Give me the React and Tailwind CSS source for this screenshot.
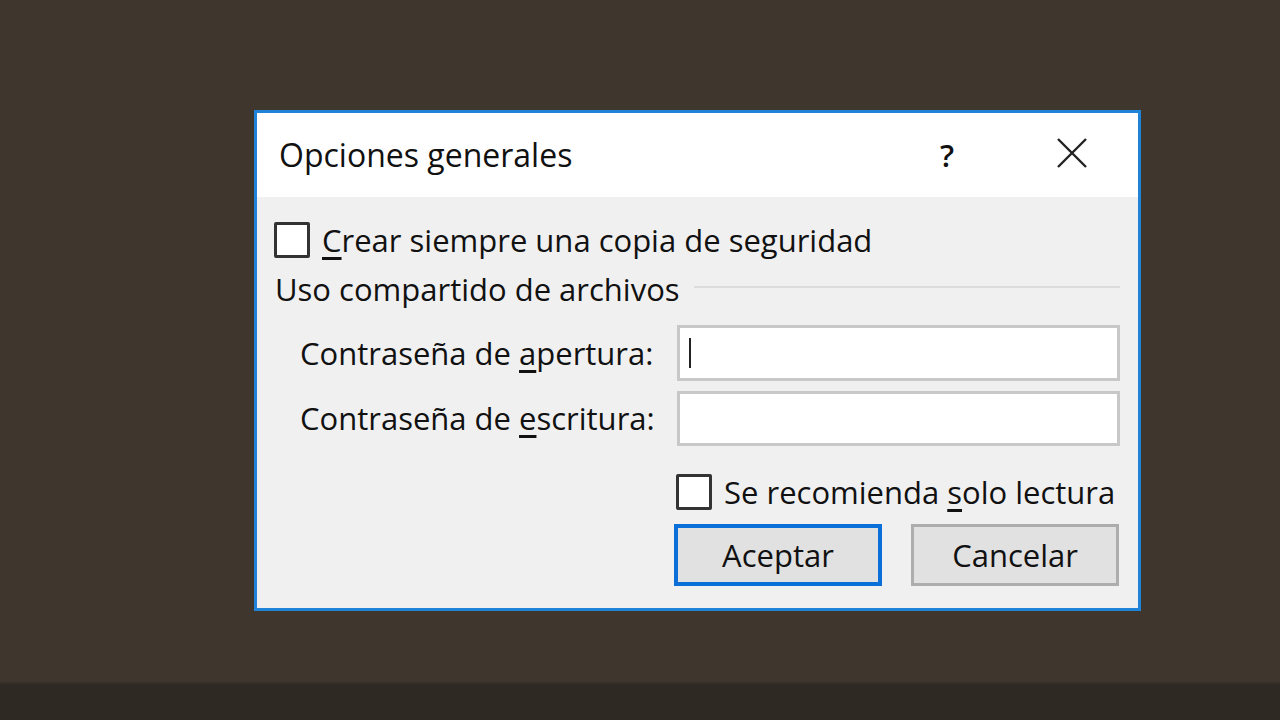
import React from 'react';

const font = { fontFamily: '"Open Sans", "Noto Sans", sans-serif' };

function Box() {
  return <div className="w-[36px] h-[36px] border-[3px] border-[#333] bg-white rounded-[2px] shrink-0" />;
}

export default function App() {
  return (
    <div className="w-full h-[720px] bg-[#3f362e] flex flex-col" style={font}>
      <div className="flex-1 pt-[110px] pl-[254px]">
        <div className="w-[887px] h-[501px] border-[3px] border-[#1f84d8] bg-[#f0f0f0] flex flex-col text-[#111] font-medium">
          <div className="h-[84px] bg-white flex items-center pl-[22px] shrink-0">
            <span className="text-[32px] whitespace-nowrap">Opciones generales</span>
            <span className="ml-auto text-[31px] w-[20px] text-center mr-[99px] font-semibold">?</span>
            <svg width="32" height="32" viewBox="0 0 32 32" className="mr-[50px] mt-[-4px]">
              <path d="M2 2 L30 30 M30 2 L2 30" stroke="#222" strokeWidth="2.4" />
            </svg>
          </div>
          <div className="flex flex-col pl-[17px] pr-[18px] pt-[25px]">
            <label className="flex items-center h-[36px]">
              <Box />
              <span className="text-[31px] ml-[12px] whitespace-nowrap"><u className="underline-offset-[5px]">C</u>rear siempre una copia de seguridad</span>
            </label>
            <div className="flex items-center mt-[14px] h-[34px]">
              <span className="text-[31px] ml-[1px] whitespace-nowrap">Uso compartido de archivos</span>
              <div className="flex-1 h-[2px] bg-[#dcdcdc] ml-[14px] mt-[-4px]" />
            </div>
            <div className="flex items-center mt-[19px]">
              <span className="text-[31px] w-[403px] pl-[26px] whitespace-nowrap">Contraseña de <u className="underline-offset-[5px]">a</u>pertura:</span>
              <div className="w-[444px] h-[56px] bg-white border-[3px] border-[#c8c8c8] flex items-center pl-[9px]">
                <div className="w-[2px] h-[30px] bg-[#222]" />
              </div>
            </div>
            <div className="flex items-center mt-[10px]">
              <span className="text-[31px] w-[403px] pl-[26px] whitespace-nowrap">Contraseña de <u className="underline-offset-[5px]">e</u>scritura:</span>
              <div className="w-[444px] h-[55px] bg-white border-[3px] border-[#c8c8c8]" />
            </div>
            <label className="flex items-center h-[36px] mt-[28px] ml-[402px]">
              <Box />
              <span className="text-[31px] ml-[12px] whitespace-nowrap">Se recomienda <u className="underline-offset-[5px]">s</u>olo lectura</span>
            </label>
            <div className="flex mt-[14px] ml-[400px] gap-[29px]">
              <button className="w-[208px] h-[62px] bg-[#e1e1e1] border-[4px] border-[#0a6fd8] text-[31px] text-[#111] font-medium">Aceptar</button>
              <button className="w-[208px] h-[62px] bg-[#e1e1e1] border-[3px] border-[#adadad] text-[31px] text-[#111] font-medium">Cancelar</button>
            </div>
          </div>
        </div>
      </div>
      <div className="h-[38px] bg-[#2e2923] border-t-[2px] border-[#352d27]" />
    </div>
  );
}
